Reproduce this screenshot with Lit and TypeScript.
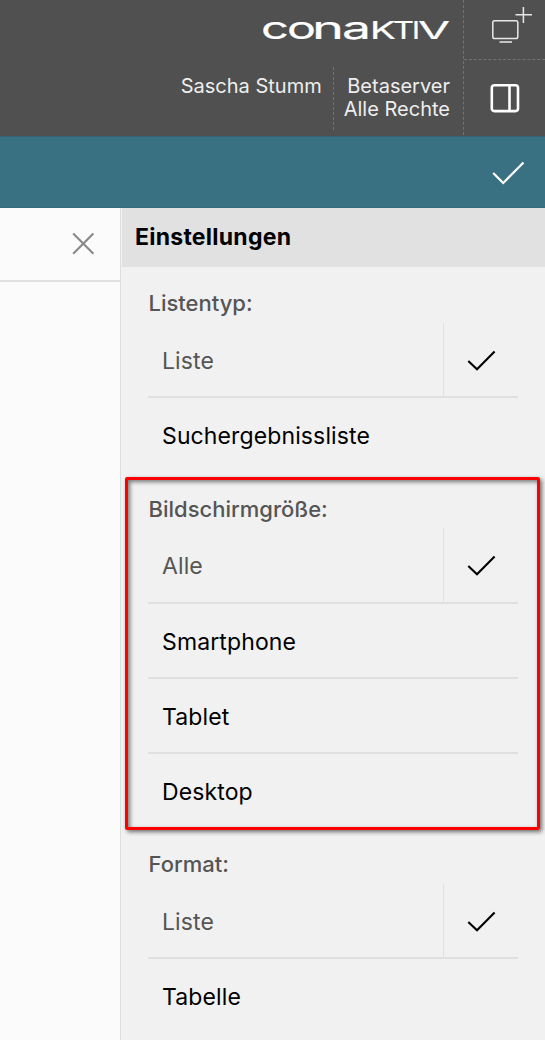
import { LitElement, html, css, svg } from "lit";
import { customElement, property } from "lit/decorators.js";

interface Group {
  label: string;
  options: string[];
  selected: number;
  marked?: boolean;
}

const GROUPS: Group[] = [
  { label: "Listentyp:", options: ["Liste", "Suchergebnissliste"], selected: 0 },
  { label: "Bildschirmgröße:", options: ["Alle", "Smartphone", "Tablet", "Desktop"], selected: 0, marked: true },
  { label: "Format:", options: ["Liste", "Tabelle"], selected: 0 },
];

// Each letter of the wordmark: character, left edge, width, font size.
const WORDMARK: [string, number, number, number][] = [
  ["c", -1, 28, 31],
  ["o", 25, 29, 31],
  ["n", 50, 32, 31],
  ["a", 80, 29, 31],
  ["K", 108, 26, 23.6],
  ["T", 131, 21, 23.6],
  ["I", 150, 8, 23.6],
  ["V", 156, 32, 23.6],
];

@customElement("option-group")
export class OptionGroup extends LitElement {
  @property({ attribute: false }) group!: Group;

  static styles = css`
    :host { display: block; position: relative; padding: 0 27px 0 26px; }
    .label { height: 54.8px; line-height: 71px; font-size: 22px; font-weight: 500; color: #555; padding-left: 0.5px; white-space: nowrap; }
    .row { box-sizing: border-box; height: 75.25px; display: flex; border-bottom: 2px solid #e0e0e0; }
    .row:last-child { border-bottom-color: transparent; }
    .name { flex: 1; padding-left: 14px; line-height: 76.4px; font-size: 23px; letter-spacing: 0.12px; color: #000; white-space: nowrap; }
    .selected .name { color: #555; }
    .tick { box-sizing: border-box; width: 75px; border-left: 1px solid #e0e0e0; display: flex; align-items: center; justify-content: center; }
    .tick svg { display: block; }
    .frame { position: absolute; left: 3px; right: 5px; top: 3px; bottom: -1px; border: 3px solid #f00; border-radius: 2px;
      box-shadow: 2px 2px 4px rgba(0,0,0,.55), inset 2px 2px 4px rgba(0,0,0,.5); pointer-events: none; }
  `;

  render() {
    const g = this.group;
    return html`
      <div class="label">${g.label}</div>
      <div>
        ${g.options.map((o, i) => html`
          <div class="row ${i === g.selected ? "selected" : ""}">
            <div class="name">${o}</div>
            ${i === g.selected ? html`<div class="tick">
              <svg width="30" height="22" viewBox="0 0 30 22" fill="none" stroke="#000" stroke-width="2.1">
                <path d="M2.3 12 L11 20.2 L28.6 2.5" />
              </svg></div>` : ""}
          </div>`)}
      </div>
      ${g.marked ? html`<div class="frame"></div>` : ""}
    `;
  }
}

@customElement("app-root")
export class AppRoot extends LitElement {
  static styles = css`
    :host { display: flex; flex-direction: column; height: 1040px; overflow: hidden; font-family: Inter, "Liberation Sans", sans-serif; background: #f1f1f1; }
    svg { display: block; }
    .top { flex: none; height: 136px; display: flex; background: #505050; color: #eee; }
    .info { flex: 1; display: flex; flex-direction: column; align-items: flex-end; }
    .brand { height: 67px; padding: 4px 12px 0 0; box-sizing: border-box; }
    .brand svg { overflow: visible; }
    .brand text { font-family: Inter, sans-serif; font-weight: 400; fill: #fff; stroke: #fff; stroke-width: 0.2px; }
    .who { display: flex; height: 63px; font-size: 20px; line-height: 23px; text-align: right; white-space: nowrap; }
    .user { padding: 8px 11px 0 0; }
    .server { border-left: 1px dashed #737373; padding: 8px 13px 0 10px; }
    .tools { flex: none; width: 82px; box-sizing: border-box; height: 135px; border-left: 1px dashed #737373; display: flex; flex-direction: column; }
    .tool { box-sizing: border-box; height: 60px; padding: 5px 0 0 27px; border-bottom: 1px dashed #737373; }
    .tool.panel { height: 75px; padding-top: 23px; padding-left: 26px; border: 0; }
    .bar { flex: none; box-sizing: border-box; height: 72px; background: #3a7182; border-top: 1px solid #346473; border-bottom: 1px solid #366979; display: flex; justify-content: flex-end; align-items: center; padding: 1px 20px 0 0; }
    .main { flex: 1; display: flex; min-height: 0; }
    .left { flex: none; box-sizing: border-box; width: 121px; background: #fbfbfb; border-right: 1px solid #dedede; }
    .close { box-sizing: border-box; height: 74px; border-bottom: 2px solid #e0e0e0; display: flex; align-items: center; justify-content: flex-end; padding-right: 25px; }
    .side { flex: 1; padding-left: 1px; background: #f1f1f1; }
    .title { height: 59px; margin-bottom: 1.25px; line-height: 59px; padding-left: 13px; background: #e1e1e1; color: #000; font-size: 23px; font-weight: 700; letter-spacing: 0.25px; }
  `;

  render() {
    return html`
      <header class="top">
        <div class="info">
          <div class="brand">
            <svg width="189" height="50" viewBox="0 0 189 50" role="img" aria-label="conaktiv">
              ${WORDMARK.map(([c, x, w, s]) => svg`<text x=${x} y="34.8" font-size=${s} textLength=${w} lengthAdjust="spacingAndGlyphs">${c}</text>`)}
            </svg>
          </div>
          <div class="who">
            <div class="user">Sascha Stumm</div>
            <div class="server">Betaserver<br>Alle Rechte</div>
          </div>
        </div>
        <div class="tools">
          <div class="tool">
            <svg width="42" height="40" viewBox="0 0 42 40" fill="none" stroke="#e8e8e8" stroke-width="1.5">
              <rect x="1.8" y="15.8" width="25" height="17.7" rx="1.8" />
              <path d="M8.5 37 H21 M24.5 9.8 H41 M32.4 2 V18" />
            </svg>
          </div>
          <div class="tool panel">
            <svg width="30" height="30" viewBox="0 0 30 30" fill="none" stroke="#fff" stroke-width="2.6">
              <rect x="1.8" y="2.3" width="26.2" height="25.8" rx="2.5" />
              <path d="M19.5 2 V28" />
            </svg>
          </div>
        </div>
      </header>
      <div class="bar">
        <svg width="34" height="26" viewBox="0 0 34 26" fill="none" stroke="#fff" stroke-width="2.2">
          <path d="M2.2 13 L12.2 23 L32.5 2.5" />
        </svg>
      </div>
      <div class="main">
        <div class="left">
          <div class="close">
            <svg width="24" height="24" viewBox="0 0 24 24" fill="none" stroke="#888" stroke-width="2.1">
              <path d="M2.2 1.6 L22.4 21.8 M22.4 1.6 L2.2 21.8" />
            </svg>
          </div>
        </div>
        <div class="side">
          <div class="title">Einstellungen</div>
          ${GROUPS.map((g) => html`<option-group .group=${g}></option-group>`)}
        </div>
      </div>
    `;
  }
}
